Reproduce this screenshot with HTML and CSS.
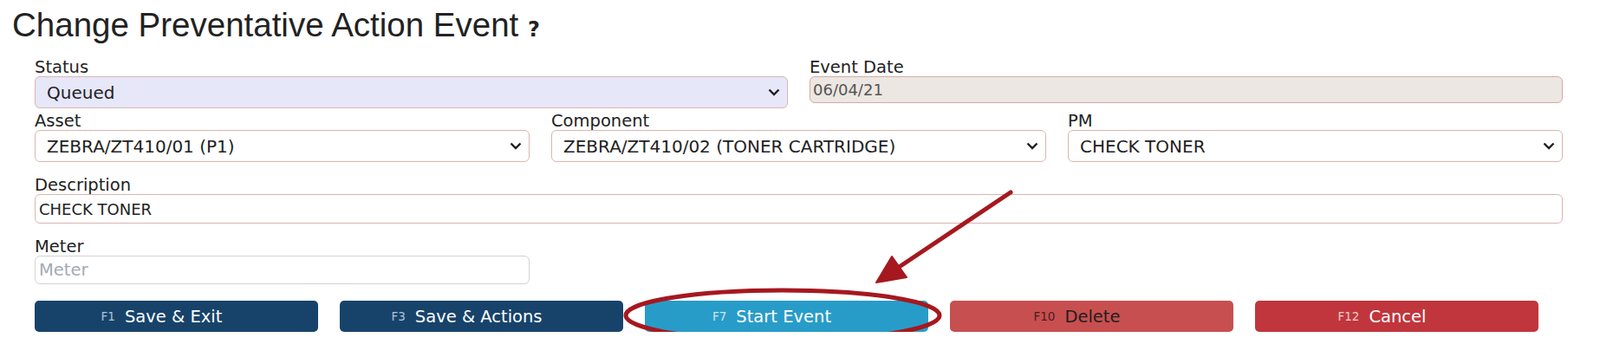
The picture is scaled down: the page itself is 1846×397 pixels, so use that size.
FILE: index.html
```html
<!DOCTYPE html>
<html lang="en">

<head>
    <meta charset="UTF-8">
    <meta name="viewport" content="width=device-width, initial-scale=1.0">
    <title>Change Preventative Action Event</title>
    <link rel="stylesheet" href="styles.css">
</head>

<body>
    <h1 class="page-title">Change Preventative Action Event <span class="help">?</span></h1>

    <form class="event-form">
        <div class="row cols-2 first">
            <div class="field">
                <label>Status</label>
                <div class="select status">
                    <span>Queued</span>
                    <svg class="chevron" width="14" height="9" viewBox="0 0 14 9"><path d="M1.5 1.5 L7 7 L12.5 1.5" /></svg>
                </div>
            </div>
            <div class="field">
                <label>Event Date</label>
                <div class="input readonly">06/04/21</div>
            </div>
        </div>

        <div class="row cols-3 tight">
            <div class="field">
                <label>Asset</label>
                <div class="select">
                    <span>ZEBRA/ZT410/01 (P1)</span>
                    <svg class="chevron" width="14" height="9" viewBox="0 0 14 9"><path d="M1.5 1.5 L7 7 L12.5 1.5" /></svg>
                </div>
            </div>
            <div class="field">
                <label>Component</label>
                <div class="select">
                    <span>ZEBRA/ZT410/02 (TONER CARTRIDGE)</span>
                    <svg class="chevron" width="14" height="9" viewBox="0 0 14 9"><path d="M1.5 1.5 L7 7 L12.5 1.5" /></svg>
                </div>
            </div>
            <div class="field">
                <label>PM</label>
                <div class="select">
                    <span>CHECK TONER</span>
                    <svg class="chevron" width="14" height="9" viewBox="0 0 14 9"><path d="M1.5 1.5 L7 7 L12.5 1.5" /></svg>
                </div>
            </div>
        </div>

        <div class="row">
            <div class="field">
                <label for="description">Description</label>
                <input class="input description" type="text" id="description" value="CHECK TONER">
            </div>
        </div>

        <div class="row cols-3">
            <div class="field">
                <label for="meter">Meter</label>
                <input class="input meter" type="text" id="meter" placeholder="Meter">
            </div>
        </div>

        <div class="actions">
            <button type="button" class="btn btn-save"><span class="key">F1</span>Save &amp; Exit</button>
            <button type="button" class="btn btn-save"><span class="key">F3</span>Save &amp; Actions</button>
            <button type="button" class="btn btn-start"><span class="key">F7</span>Start Event</button>
            <button type="button" class="btn btn-delete"><span class="key">F10</span>Delete</button>
            <button type="button" class="btn btn-cancel"><span class="key">F12</span>Cancel</button>
        </div>
    </form>

    <!-- red markup drawn over the screenshot -->
    <svg class="annotation" width="1846" height="397" viewBox="0 0 1846 397">
        <ellipse cx="903" cy="364" rx="181" ry="29" />
        <line x1="1166" y1="222" x2="1036" y2="309" />
        <polygon points="1011,326 1029,296 1046,320" />
    </svg>
</body>
</html>
```

FILE: styles.css
```css
body {
    margin: 0;
    position: relative;
    font-family: "DejaVu Sans", Verdana, sans-serif;
    color: #222;
    background: #fff;
}

.page-title {
    margin: 6px 0 0;
    padding-left: 14px;
    font-family: "Liberation Sans", Arial, sans-serif;
    font-weight: normal;
    font-size: 38.5px;
    line-height: 46px;
    color: #222;
}

.help {
    font-family: "DejaVu Sans", Verdana, sans-serif;
    font-weight: bold;
    font-size: 24px;
}

.event-form {
    padding: 10px 43px 0 40px;
}

.row {
    display: grid;
    column-gap: 25px;
    margin-top: 16px;
}

.row.first {
    margin-top: 0;
}

.row.tight {
    margin-top: 4px;
}

.cols-2 {
    grid-template-columns: 1fr 1fr;
}

.cols-3 {
    grid-template-columns: repeat(3, 1fr);
}

.field label {
    display: block;
    font-size: 19.5px;
    line-height: 21px;
}

.select {
    height: 37px;
    box-sizing: border-box;
    display: flex;
    align-items: center;
    justify-content: space-between;
    padding: 0 8px 0 13px;
    border: 1px solid #dbb5b0;
    border-radius: 6px;
    background: #fff;
    font-size: 20px;
}

.select.status {
    background: #e7e7fa;
}

.chevron path {
    fill: none;
    stroke: #1e1e1e;
    stroke-width: 2.4;
}

.input {
    display: block;
    width: 100%;
    box-sizing: border-box;
    margin: 0;
    padding: 0 4px;
    border: 1px solid #dbb5b0;
    border-radius: 6px;
    background: #fff;
    font-family: inherit;
    font-size: 18px;
    color: #222;
}

.input.readonly {
    height: 31px;
    line-height: 29px;
    padding: 0 3px;
    background: #ece7e2;
    border-color: #d4aaa5;
    color: #555;
}

.input.description {
    height: 34px;
}

.input.meter {
    height: 33px;
    border-color: #d3d3d3;
    font-size: 19.5px;
}

.input.meter::placeholder {
    color: #a3abb4;
}

.actions {
    display: flex;
    gap: 25px;
    margin-top: 19px;
}

.btn {
    width: 327px;
    height: 36px;
    box-sizing: border-box;
    display: flex;
    align-items: center;
    justify-content: center;
    padding: 0 34px 0 0;
    border: none;
    border-radius: 5px;
    font-family: inherit;
    font-size: 19.5px;
    color: #fff;
}

.btn .key {
    margin-right: 11px;
    font-size: 13.5px;
}

.btn-save {
    background: #17436b;
}

.btn-save .key {
    color: #b4c2d2;
}

.btn-start {
    background: #289cc8;
}

.btn-start .key {
    color: #cfe6f1;
}

.btn-delete {
    background: #c84f50;
    color: #1e1e1e;
}

.btn-delete .key {
    color: #4a1c1c;
}

.btn-cancel {
    background: #c0363c;
}

.btn-cancel .key {
    color: #ebcdcd;
}

.annotation {
    position: absolute;
    left: 0;
    top: 0;
    pointer-events: none;
}

.annotation ellipse,
.annotation line {
    fill: none;
    stroke: #a6181f;
    stroke-width: 5;
    stroke-linecap: round;
}

.annotation polygon {
    fill: #a6181f;
    stroke: #a6181f;
    stroke-width: 2;
    stroke-linejoin: round;
}
```
